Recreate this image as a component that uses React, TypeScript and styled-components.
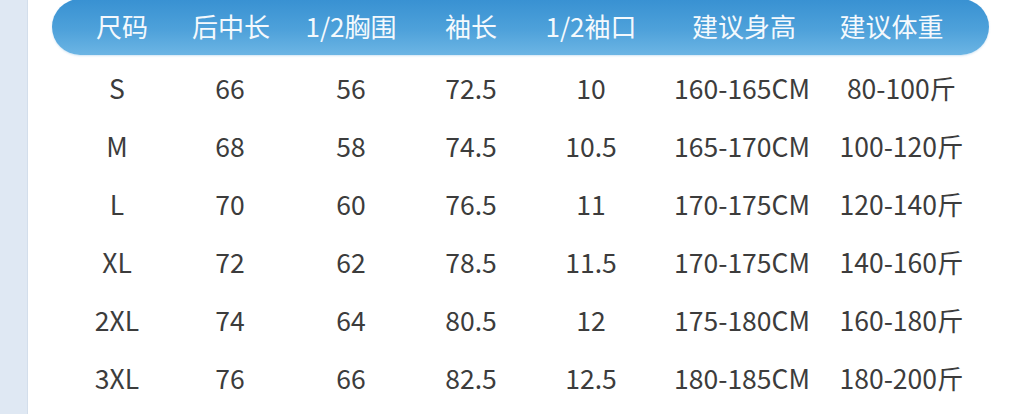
import React from 'react';
import styled, { createGlobalStyle } from 'styled-components';

const GlobalStyle = createGlobalStyle`
  html, body {
    margin: 0;
    padding: 0;
    background: #ffffff;
  }
  body {
    font-family: "Noto Sans CJK SC", "Noto Sans", sans-serif;
  }
`;

const Page = styled.div`
  display: flex;
  width: 1024px;
  height: 414px;
  overflow: hidden;
  background: #ffffff;
`;

const SideStrip = styled.div`
  width: 27px;
  flex-shrink: 0;
  background: #dfe8f3;
  border-right: 1px solid #d3deeb;
`;

const Main = styled.div`
  flex: 1;
  padding-left: 24px;
`;

const COLUMNS = '140px 76px 166px 74px 166px 140px 155px';

const HeaderBar = styled.div`
  display: grid;
  grid-template-columns: ${COLUMNS};
  align-items: center;
  width: 937px;
  height: 56px;
  margin-top: -1px;
  border-radius: 28px;
  background: linear-gradient(to bottom, #3891d2 0%, #4ea1da 55%, #6cb5e4 100%);
  box-shadow: 0 1px 2px rgba(80, 150, 210, 0.25);
`;

const HeadCell = styled.div`
  text-align: center;
  color: #f4f9fd;
  font-size: 26px;
  line-height: 1;
  white-space: nowrap;
  padding-bottom: 2px;
`;

const Body = styled.div`
  padding-top: 4px;
`;

const Row = styled.div`
  display: grid;
  grid-template-columns: ${COLUMNS};
  align-items: center;
  width: 937px;
  height: 58px;
`;

// $shift nudges a column's values off the header's centre, as in the source chart
const Cell = styled.div<{ $shift: number }>`
  text-align: center;
  color: #3c3c3c;
  font-size: 26.5px;
  line-height: 1;
  white-space: nowrap;
  position: relative;
  left: ${(p) => p.$shift}px;
`;

const shifts = [-5, 0, 0, 0, 0, -2, 10];

const headers = ['尺码', '后中长', '1/2胸围', '袖长', '1/2袖口', '建议身高', '建议体重'];

const rows = [
  ['S', '66', '56', '72.5', '10', '160-165CM', '80-100斤'],
  ['M', '68', '58', '74.5', '10.5', '165-170CM', '100-120斤'],
  ['L', '70', '60', '76.5', '11', '170-175CM', '120-140斤'],
  ['XL', '72', '62', '78.5', '11.5', '170-175CM', '140-160斤'],
  ['2XL', '74', '64', '80.5', '12', '175-180CM', '160-180斤'],
  ['3XL', '76', '66', '82.5', '12.5', '180-185CM', '180-200斤'],
];

export default function App() {
  return (
    <>
      <GlobalStyle />
      <Page>
        <SideStrip />
        <Main>
          <HeaderBar>
            {headers.map((h) => (
              <HeadCell key={h}>{h}</HeadCell>
            ))}
          </HeaderBar>
          <Body>
            {rows.map((r) => (
              <Row key={r[0]}>
                {r.map((c, i) => (
                  <Cell key={i} $shift={shifts[i]}>
                    {c}
                  </Cell>
                ))}
              </Row>
            ))}
          </Body>
        </Main>
      </Page>
    </>
  );
}
